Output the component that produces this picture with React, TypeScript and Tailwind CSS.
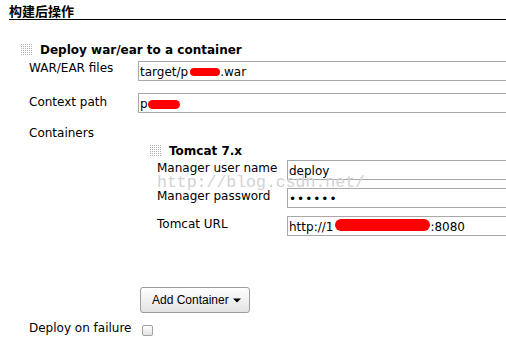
import React from 'react';

function Grip() {
  const dots: React.ReactNode[] = [];
  for (let i = 0; i < 6; i++) {
    for (let j = 0; j < 6; j++) {
      dots.push(<rect key={`${i}-${j}`} x={i * 2} y={j * 2} width={1} height={1} fill="#b4b4b4" />);
    }
  }
  return (
    <svg width="11" height="11" viewBox="0 0 11 11">
      {dots}
    </svg>
  );
}

function Blob({ className }: { className: string }) {
  return <span className={`inline-block shrink-0 rounded-full bg-[#ff0000] ${className}`} />;
}

function Field({ children }: { children: React.ReactNode }) {
  return (
    <div className="flex h-[20px] w-[400px] shrink-0 items-start whitespace-nowrap border border-[#a8a8a8] bg-white pl-[1px] pt-[3px]">
      {children}
    </div>
  );
}

export default function App() {
  return (
    <div className="relative h-[349px] w-[506px] overflow-hidden bg-white font-['DejaVu_Sans',sans-serif] text-[12px] leading-[14px] text-black">
      {/* section heading */}
      <div className="ml-[9px] h-[20px] border-b border-black pt-[3px]">
        <span className="font-['Noto_Sans_CJK_SC',sans-serif] text-[13px] font-bold leading-[16px]">构建后操作</span>
      </div>

      {/* Deploy war/ear */}
      <div className="mt-[23px] flex items-start">
        <div className="ml-[21px] mt-[1px] flex">
          <Grip />
        </div>
        <span className="ml-[8px] font-bold">Deploy war/ear to a container</span>
      </div>

      <div className="mt-[4px] flex">
        <div className="w-[138px] shrink-0 pl-[29px]">WAR/EAR files</div>
        <Field>
          <span>target/p</span>
          <Blob className="ml-[2px] mt-[3px] h-[8px] w-[30px]" />
          <span>.war</span>
        </Field>
      </div>

      <div className="mt-[12px] flex">
        <div className="w-[138px] shrink-0 pl-[29px] pt-[2px]">Context path</div>
        <Field>
          <span>p</span>
          <Blob className="mt-[3px] h-[9px] w-[32px]" />
        </Field>
      </div>

      <div className="mt-[13px] pl-[29px]">Containers</div>

      {/* Tomcat container */}
      <div className="mt-[4px] flex items-start">
        <div className="ml-[150px] mt-[1px] flex">
          <Grip />
        </div>
        <span className="ml-[8px] font-bold">Tomcat 7.x</span>
      </div>

      <div className="mt-[2px] flex">
        <div className="ml-[157px] w-[130px] shrink-0 pt-[1px]">Manager user name</div>
        <Field>
          <span>deploy</span>
        </Field>
      </div>

      <div className="mt-[8px] flex">
        <div className="ml-[157px] w-[130px] shrink-0 pt-[1px]">Manager password</div>
        <Field>
          <span className="tracking-[1px]">••••••</span>
        </Field>
      </div>

      <div className="mt-[8px] flex">
        <div className="ml-[157px] w-[130px] shrink-0 pt-[1px]">Tomcat URL</div>
        <Field>
          <span>http://1</span>
          <Blob className="ml-[2px] mt-[-1px] h-[12px] w-[95px]" />
          <span>:8080</span>
        </Field>
      </div>

      <button className="ml-[140px] mt-[51px] flex h-[26px] w-[110px] items-center rounded-[3px] border border-[#9c9c9c] bg-linear-to-b from-white to-[#e2e2e2] pl-[11px] font-['Liberation_Sans',sans-serif] text-[12px] text-black">
        <span>Add Container</span>
        <svg className="ml-[4px]" width="8" height="5" viewBox="0 0 8 5">
          <path d="M0 0.5 L8 0.5 L4 4.5 Z" fill="#000" />
        </svg>
      </button>

      <div className="mt-[8px] flex items-start">
        <div className="w-[138px] shrink-0 pl-[29px]">Deploy on failure</div>
        <div className="ml-[4px] mt-[4px] h-[11px] w-[11px] rounded-[2px] border border-[#a0a0a0] bg-linear-to-b from-[#fdfdfd] to-[#e4e4e4]" />
      </div>

      {/* watermark */}
      <div className="pointer-events-none absolute left-[157px] top-[174px] font-['Liberation_Mono',monospace] text-[16.5px] leading-[17px] text-[#d2d2d2]">
        http://blog.csdn.net/
      </div>
    </div>
  );
}
